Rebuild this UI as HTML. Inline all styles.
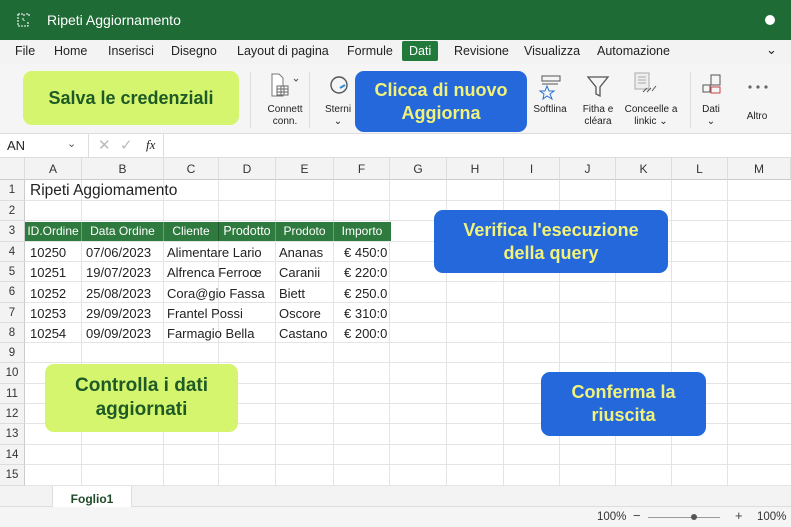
<!DOCTYPE html>
<html><head><meta charset="utf-8"><style>
*{box-sizing:border-box;margin:0;padding:0}
body{width:791px;height:527px;overflow:hidden;background:#fff;font-family:"Liberation Sans","DejaVu Sans",sans-serif;position:relative;color:#222}
.a{position:absolute}
.title{left:0;top:0;width:791px;height:40px;background:#1f6b35;color:#fff;font-size:14px}
.menu{left:0;top:40px;width:791px;height:24px;background:#f3f3f3;font-size:12.5px;color:#222}
.menu span{position:absolute;top:4px}
.ribbon{left:0;top:64px;width:791px;height:70px;background:#f5f5f5;border-bottom:1px solid #ddd}
.rl{position:absolute;font-size:10px;text-align:center;color:#222;line-height:12px}
.fbar{left:0;top:134px;width:791px;height:24px;background:#fff;border-bottom:1px solid #ddd}
.colh{top:158px;height:22px;background:#f3f3f3;border-bottom:1px solid #ccc;border-right:1px solid #ddd;font-size:12px;text-align:center;line-height:22px;color:#333}
.rowh{left:0;width:25px;background:#f3f3f3;border-right:1px solid #ccc;border-bottom:1px solid #ddd;font-size:11.5px;text-align:center;color:#333}
.hl{height:1px;background:#e4e4e4;left:25px;width:766px}
.vl{width:1px;background:#e4e4e4;top:180px;height:306px}
.cell{font-size:13px;color:#222;white-space:nowrap}
.hd{background:#2f7a3e;color:#fff;font-size:12px;text-align:center}
.cg{background:#d6f56f;color:#1e5a25;font-weight:bold;text-align:center;border-radius:9px}
.cb{background:#2468dc;color:#f1f27a;font-weight:bold;text-align:center;border-radius:9px}
</style></head><body>
<div class="a title">
 <svg class="a" style="left:17px;top:13px" width="13" height="14" viewBox="0 0 13 14"><path d="M1 1h6v3M1 1v12h10V8M9 1h3v3M5 6h2v2" stroke="#fff" fill="none" stroke-width="1.1" stroke-dasharray="2 1"/></svg>
 <span class="a" style="left:47px;top:12px">Ripeti Aggiornamento</span>
 <div class="a" style="left:765px;top:15px;width:10px;height:10px;border-radius:50%;background:#fff"></div>
</div>
<div class="a menu">
 <span style="left:15px">File</span><span style="left:54px">Home</span><span style="left:108px">Inserisci</span><span style="left:171px">Disegno</span><span style="left:237px">Layout di pagina</span><span style="left:347px">Formule</span>
 <span style="left:402px;top:1px;background:#227a3a;color:#fff;padding:3px 7px;border-radius:2px">Dati</span>
 <span style="left:454px">Revisione</span><span style="left:524px">Visualizza</span><span style="left:597px">Automazione</span>
 <span style="left:766px;top:2px;font-size:13px">&#8964;</span>
</div>
<div class="a ribbon">
 <div class="a" style="left:250px;top:8px;width:1px;height:56px;background:#ddd"></div>
 <div class="a" style="left:309px;top:8px;width:1px;height:56px;background:#ddd"></div>
 <div class="a" style="left:690px;top:8px;width:1px;height:56px;background:#ddd"></div>
 <svg class="a" style="left:270px;top:9px" width="30" height="26" viewBox="0 0 30 26"><path d="M2 1h7l4 4v18H2z" fill="#fff" stroke="#777"/><rect x="7" y="13" width="11" height="9" fill="#fff" stroke="#666"/><path d="M7 16h11M7 19h11M11 13v9M14 13v9" stroke="#666"/><path d="M24 6l2 2 2-2" stroke="#555" fill="none"/></svg>
 <div class="rl" style="left:262px;top:40px;width:46px">Connett<br>conn.</div>
 <svg class="a" style="left:328px;top:10px" width="22" height="22"><circle cx="11" cy="11" r="8" fill="none" stroke="#555" stroke-width="1.4"/><path d="M12 14l5-3" stroke="#2a8cd8" stroke-width="2"/></svg>
 <div class="rl" style="left:320px;top:40px;width:36px">Sterni<br>&#8964;</div>
 <svg class="a" style="left:538px;top:10px" width="26" height="26"><rect x="4" y="2" width="18" height="5" fill="none" stroke="#555"/><path d="M4 10h16" stroke="#555"/><path d="M9 12l2 5 5 0-4 3 2 5-5-3-4 3 1-5-4-3h5z" fill="none" stroke="#2a6fd0"/></svg>
 <div class="rl" style="left:530px;top:40px;width:40px">Softlina</div>
 <svg class="a" style="left:586px;top:10px" width="24" height="24"><path d="M2 3h20l-8 10v9l-4-2v-7z" fill="none" stroke="#555" stroke-width="1.3"/></svg>
 <div class="rl" style="left:578px;top:40px;width:40px">Fitha e<br>cléara</div>
 <svg class="a" style="left:633px;top:8px" width="30" height="26"><rect x="2" y="1" width="14" height="16" fill="#eee" stroke="#aaa"/><path d="M5 5h8M5 8h8M5 11h8" stroke="#aaa"/><path d="M10 20l4-4M14 20l4-4M19 19l4-5" stroke="#555"/></svg>
 <div class="rl" style="left:620px;top:40px;width:62px">Conceelle a<br>linkic &#8964;</div>
 <svg class="a" style="left:700px;top:9px" width="24" height="24"><rect x="11" y="2" width="9" height="10" fill="none" stroke="#555"/><rect x="3" y="12" width="7" height="7" fill="none" stroke="#555"/><rect x="11" y="14" width="9" height="6" fill="none" stroke="#c44"/></svg>
 <div class="rl" style="left:696px;top:40px;width:30px">Dati<br>&#8964;</div>
 <svg class="a" style="left:747px;top:20px" width="22" height="6"><circle cx="3" cy="3" r="1.6" fill="#666"/><circle cx="11" cy="3" r="1.6" fill="#666"/><circle cx="19" cy="3" r="1.6" fill="#666"/></svg>
 <div class="rl" style="left:740px;top:47px;width:34px">Altro</div>
</div>
<div class="a cg" style="left:23px;top:71px;width:216px;height:54px;font-size:18px;line-height:54px">Salva le credenziali</div>
<div class="a cb" style="left:355px;top:71px;width:172px;height:61px;font-size:18px;line-height:23px;padding-top:8px">Clicca di nuovo<br>Aggiorna</div>
<div class="a fbar">
 <span class="a" style="left:7px;top:4px;font-size:13px">AN</span>
 <span class="a" style="left:67px;top:3px;font-size:11px;color:#555">&#8964;</span>
 <div class="a" style="left:88px;top:0;width:1px;height:24px;background:#ddd"></div>
 <span class="a" style="left:98px;top:2px;font-size:15px;color:#bbb">&#10005;</span>
 <span class="a" style="left:120px;top:2px;font-size:15px;color:#bbb">&#10003;</span>
 <span class="a" style="left:146px;top:3px;font-size:13px;font-style:italic;font-family:'Liberation Serif',serif">fx</span>
 <div class="a" style="left:163px;top:0;width:1px;height:24px;background:#ddd"></div>
</div>
<div class="a colh" style="left:0;width:25px"></div>
<div class="a colh" style="left:25px;width:57px">A</div>
<div class="a colh" style="left:82px;width:82px">B</div>
<div class="a colh" style="left:164px;width:55px">C</div>
<div class="a colh" style="left:219px;width:57px">D</div>
<div class="a colh" style="left:276px;width:58px">E</div>
<div class="a colh" style="left:334px;width:56px">F</div>
<div class="a colh" style="left:390px;width:57px">G</div>
<div class="a colh" style="left:447px;width:57px">H</div>
<div class="a colh" style="left:504px;width:56px">I</div>
<div class="a colh" style="left:560px;width:56px">J</div>
<div class="a colh" style="left:616px;width:56px">K</div>
<div class="a colh" style="left:672px;width:56px">L</div>
<div class="a colh" style="left:728px;width:63px">M</div>
<div class="a rowh" style="top:180px;height:21px;line-height:21px">1</div>
<div class="a rowh" style="top:201px;height:20px;line-height:20px">2</div>
<div class="a rowh" style="top:221px;height:21px;line-height:21px">3</div>
<div class="a rowh" style="top:242px;height:20px;line-height:20px">4</div>
<div class="a rowh" style="top:262px;height:20px;line-height:20px">5</div>
<div class="a rowh" style="top:282px;height:21px;line-height:21px">6</div>
<div class="a rowh" style="top:303px;height:20px;line-height:20px">7</div>
<div class="a rowh" style="top:323px;height:20px;line-height:20px">8</div>
<div class="a rowh" style="top:343px;height:20px;line-height:20px">9</div>
<div class="a rowh" style="top:363px;height:21px;line-height:21px">10</div>
<div class="a rowh" style="top:384px;height:20px;line-height:20px">11</div>
<div class="a rowh" style="top:404px;height:20px;line-height:20px">12</div>
<div class="a rowh" style="top:424px;height:21px;line-height:21px">13</div>
<div class="a rowh" style="top:445px;height:20px;line-height:20px">14</div>
<div class="a rowh" style="top:465px;height:21px;line-height:21px">15</div>
<div class="a hl" style="top:200px"></div><div class="a hl" style="top:220px"></div><div class="a hl" style="top:241px"></div><div class="a hl" style="top:261px"></div><div class="a hl" style="top:281px"></div><div class="a hl" style="top:302px"></div><div class="a hl" style="top:322px"></div><div class="a hl" style="top:342px"></div><div class="a hl" style="top:362px"></div><div class="a hl" style="top:383px"></div><div class="a hl" style="top:403px"></div><div class="a hl" style="top:423px"></div><div class="a hl" style="top:444px"></div><div class="a hl" style="top:464px"></div><div class="a hl" style="top:485px"></div>
<div class="a vl" style="left:81px"></div><div class="a vl" style="left:163px"></div><div class="a vl" style="left:218px"></div><div class="a vl" style="left:275px"></div><div class="a vl" style="left:333px"></div><div class="a vl" style="left:389px"></div><div class="a vl" style="left:446px"></div><div class="a vl" style="left:503px"></div><div class="a vl" style="left:559px"></div><div class="a vl" style="left:615px"></div><div class="a vl" style="left:671px"></div><div class="a vl" style="left:727px"></div>
<div class="a cell" style="left:30px;top:182px;font-size:15.5px">Ripeti Aggiomamento</div>
<div class="a hd" style="left:25px;top:222px;width:366px;height:19px"></div>
<div class="a hd" style="left:25px;top:222px;width:56px;height:19px;line-height:19px">ID.Ordine</div>
<div class="a hd" style="left:82px;top:222px;width:81px;height:19px;line-height:19px">Data Ordine</div>
<div class="a hd" style="left:164px;top:222px;width:54px;height:19px;line-height:19px">Cliente</div>
<div class="a hd" style="left:219px;top:222px;width:56px;height:19px;line-height:19px;font-size:12.5px">Prodotto</div>
<div class="a hd" style="left:276px;top:222px;width:57px;height:19px;line-height:19px">Prodoto</div>
<div class="a hd" style="left:334px;top:222px;width:56px;height:19px;line-height:19px">Importo</div>
<div class="a" style="left:81px;top:222px;width:1px;height:19px;background:#6aa07a"></div><div class="a" style="left:163px;top:222px;width:1px;height:19px;background:#6aa07a"></div><div class="a" style="left:218px;top:222px;width:1px;height:19px;background:#1f5a2c"></div><div class="a" style="left:275px;top:222px;width:1px;height:19px;background:#6aa07a"></div><div class="a" style="left:333px;top:222px;width:1px;height:19px;background:#6aa07a"></div>
<div class="a cell" style="left:30px;top:245px">10250</div><div class="a cell" style="left:86px;top:245px">07/06/2023</div><div class="a cell" style="left:167px;top:245px">Alimentare Lario</div><div class="a cell" style="left:279px;top:245px">Ananas</div><div class="a cell" style="left:344px;top:245px">€ 450:0</div>
<div class="a cell" style="left:30px;top:265px">10251</div><div class="a cell" style="left:86px;top:265px">19/07/2023</div><div class="a cell" style="left:167px;top:265px">Alfrenca Ferroœ</div><div class="a cell" style="left:279px;top:265px">Caranii</div><div class="a cell" style="left:344px;top:265px">€ 220:0</div>
<div class="a cell" style="left:30px;top:286px">10252</div><div class="a cell" style="left:86px;top:286px">25/08/2023</div><div class="a cell" style="left:167px;top:286px">Cora@gio Fassa</div><div class="a cell" style="left:279px;top:286px">Biett</div><div class="a cell" style="left:344px;top:286px">€ 250.0</div>
<div class="a cell" style="left:30px;top:306px">10253</div><div class="a cell" style="left:86px;top:306px">29/09/2023</div><div class="a cell" style="left:167px;top:306px">Frantel Possi</div><div class="a cell" style="left:279px;top:306px">Oscore</div><div class="a cell" style="left:344px;top:306px">€ 310:0</div>
<div class="a cell" style="left:30px;top:326px">10254</div><div class="a cell" style="left:86px;top:326px">09/09/2023</div><div class="a cell" style="left:167px;top:326px">Farmagio Bella</div><div class="a cell" style="left:279px;top:326px">Castano</div><div class="a cell" style="left:344px;top:326px">€ 200:0</div>
<div class="a cb" style="left:434px;top:210px;width:234px;height:63px;font-size:18px;line-height:23px;padding-top:9px">Verifica l'esecuzione<br>della query</div>
<div class="a cg" style="left:45px;top:364px;width:193px;height:68px;font-size:19px;line-height:24px;padding-top:10px">Controlla i dati<br>aggiornati</div>
<div class="a cb" style="left:541px;top:372px;width:165px;height:64px;font-size:18px;line-height:23px;padding-top:9px">Conferma la<br>riuscita</div>
<div class="a" style="left:0;top:486px;width:791px;height:21px;background:#f3f3f3;border-bottom:1px solid #ddd"></div>
<div class="a" style="left:52px;top:486px;width:80px;height:21px;background:#fff;border-left:1px solid #ddd;border-right:1px solid #ddd;font-size:12px;font-weight:bold;color:#1e4a28;text-align:center;line-height:26px">Foglio1</div>
<div class="a" style="left:0;top:507px;width:791px;height:20px;background:#f5f5f5"></div>
<span class="a" style="left:597px;top:511px;font-size:11.5px;color:#333">100%</span>
<span class="a" style="left:633px;top:508px;font-size:13px;color:#444">−</span>
<div class="a" style="left:648px;top:517px;width:72px;height:1px;background:#999"></div>
<div class="a" style="left:691px;top:514px;width:6px;height:6px;border-radius:50%;background:#555"></div>
<span class="a" style="left:735px;top:508px;font-size:13px;color:#444">+</span>
<span class="a" style="left:757px;top:511px;font-size:11.5px;color:#333">100%</span>
</body></html>
